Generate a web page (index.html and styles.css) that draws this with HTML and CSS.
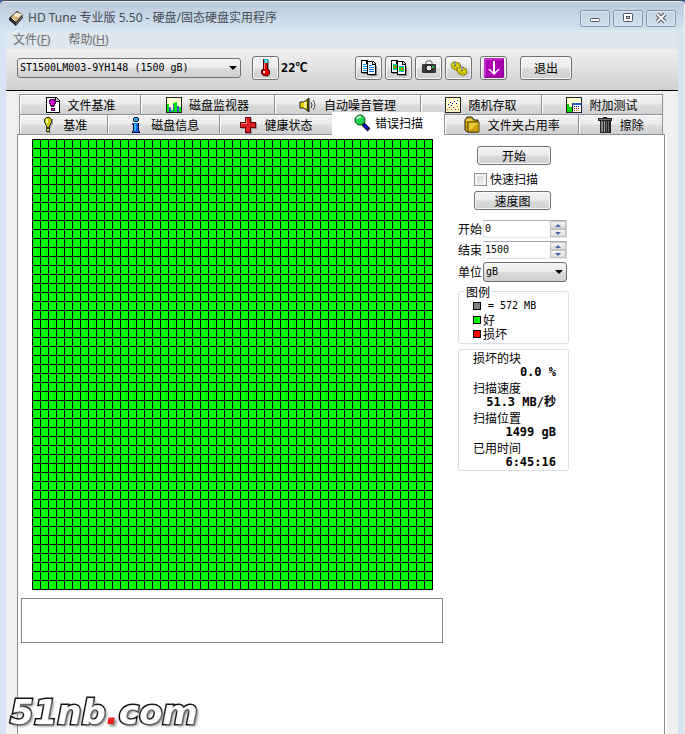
FILE: index.html
```html
<!DOCTYPE html>
<html lang="zh-CN">
<head>
    <meta charset="UTF-8">
    <meta name="viewport" content="width=device-width, initial-scale=1.0">
    <title>HD Tune 专业版 5.50</title>
    <link rel="stylesheet" href="styles.css">
</head>
<body>
    <div class="window">
        <header class="titlebar">
            <svg class="app-icon" width="16" height="16" viewBox="0 0 16 16">
                <path d="M1 8L9 1l6 4-7 9z" fill="#222"/>
                <path d="M1 8l7 6v2L1 10z" fill="#111"/>
                <path d="M8 14l7-9v3l-7 8z" fill="#555"/>
                <path d="M3 7l6-5 5 3-6 7z" fill="#d8b078"/>
                <ellipse cx="9" cy="5" rx="3" ry="2" fill="#f8ecd0"/>
                <path d="M4 8l3 3M12 4l2 1" stroke="#fff" fill="none"/>
            </svg>
            <h1>HD Tune 专业版 5.50 - 硬盘/固态硬盘实用程序</h1>
            <div class="window-buttons">
                <button type="button" aria-label="最小化">
                    <svg width="12" height="12" viewBox="0 0 12 12"><rect x="1.500" y="6.500" width="9" height="3" rx="1" fill="#fff" stroke="#535666"/></svg>
                </button>
                <button type="button" aria-label="最大化">
                    <svg width="12" height="12" viewBox="0 0 12 12"><rect x="1.500" y="1.500" width="9" height="8" rx="1" fill="#fff" stroke="#535666"/><rect x="4.500" y="4.500" width="3" height="2" fill="#c8d4e2" stroke="#535666"/></svg>
                </button>
                <button type="button" aria-label="关闭">
                    <svg width="12" height="12" viewBox="0 0 12 12"><path d="M2 2l8 8M10 2l-8 8" stroke="#535666" stroke-width="4"/><path d="M2 2l8 8M10 2l-8 8" stroke="#fff" stroke-width="2"/></svg>
                </button>
            </div>
        </header>

        <div class="client">
            <nav class="menubar">
                <a href="#file">文件(<u>F</u>)</a>
                <a href="#help">帮助(<u>H</u>)</a>
            </nav>

            <div class="toolbar">
                <div class="select drive-select">
                    <select aria-label="硬盘">
                        <option>ST1500LM003-9YH148 (1500 gB)</option>
                    </select>
                </div>
                <div class="temperature">
                    <button type="button" class="tool" aria-label="温度">
                        <svg width="16" height="18" viewBox="0 0 16 18" shape-rendering="crispEdges">
                            <path d="M10 1h1v10h1v6h-1v1H7v-1h3z" fill="#999"/>
                            <path d="M5 0h5v10h1v1h1v4h-1v1h-1v1H5v-1H4v-1H3v-4h1v-1h1z" fill="#500"/>
                            <path d="M6 0h4v4H6z" fill="#18a8b8"/><path d="M7 1h2v3H7z" fill="#60f0f8"/>
                            <path d="M6 4h3v7h2v4h-1v1H5v-1H4v-3l2-2z" fill="#e80000"/>
                            <path d="M6 4h1v6H6z" fill="#ff8080"/>
                            <path d="M5 12h2v2H5z" fill="#fff"/>
                        </svg>
                    </button>
                    <span>22℃</span>
                </div>
                <div class="tools">
                    <button type="button" class="tool" aria-label="复制文本">
                        <svg width="18" height="18" viewBox="0 0 18 18" shape-rendering="crispEdges">
                            <path d="M2 14h7v1H2zM9 16h8v1H9zM16 7h1v10h-1z" fill="#888"/>
                            <path d="M1 1h6l3 3v10H1z" fill="#000"/><path d="M2 2h4v3h3v8H2z" fill="#fff"/>
                            <path d="M3 5h3v1H3zM3 7h4v1H3zM3 9h4v1H3zM3 11h4v1H3z" fill="#0090f0"/>
                            <path d="M7 2h6l3 3v11H7z" fill="#000"/><path d="M8 3h4v3h3v9H8z" fill="#fff"/><path d="M13 3v2h2z" fill="#ccc"/>
                            <path d="M9 6h3v1H9zM9 8h5v1H9zM9 10h5v1H9zM9 12h5v1H9z" fill="#0070f0"/>
                        </svg>
                    </button>
                    <button type="button" class="tool" aria-label="复制图像">
                        <svg width="18" height="18" viewBox="0 0 18 18" shape-rendering="crispEdges">
                            <path d="M2 14h7v1H2zM9 16h8v1H9zM16 7h1v10h-1z" fill="#888"/>
                            <path d="M1 1h6l3 3v10H1z" fill="#000"/><path d="M2 2h4v3h3v8H2z" fill="#fff"/>
                            <path d="M3 5h4v6H3z" fill="#00b0d0"/><path d="M3 6h4v4H3z" fill="#00d820"/><path d="M4 7h2v2H4z" fill="#c07000"/>
                            <path d="M7 2h6l3 3v11H7z" fill="#000"/><path d="M8 3h4v3h3v9H8z" fill="#fff"/><path d="M13 3v2h2z" fill="#ccc"/>
                            <path d="M9 7h5v6H9z" fill="#00a0f0"/><path d="M9 8h5v4H9z" fill="#00e800"/><path d="M11 9h2v2h-2z" fill="#e06000"/>
                        </svg>
                    </button>
                    <button type="button" class="tool" aria-label="截图">
                        <svg width="18" height="18" viewBox="0 0 18 18">
                            <path d="M6 6V3l1-1h4l1 1v3" fill="none" stroke="#666" stroke-width="1"/>
                            <rect x="2" y="5" width="14" height="9" rx="1" fill="#303030"/>
                            <path d="M4 5v9M14 5v9" stroke="#555"/>
                            <circle cx="9" cy="9" r="3" fill="#e8e8e8" stroke="#111"/>
                            <rect x="12" y="7" width="2" height="2" fill="#20d040"/>
                        </svg>
                    </button>
                    <button type="button" class="tool" aria-label="设置">
                        <svg width="18" height="18" viewBox="0 0 18 18">
                            <g stroke="#4c4800" stroke-width="1" stroke-dasharray="1 1">
                                <ellipse cx="6" cy="7" rx="5" ry="4" fill="#c8c000" transform="rotate(25 6 7)"/>
                                <ellipse cx="12" cy="12" rx="5" ry="4" fill="#c8c000" transform="rotate(25 12 12)"/>
                            </g>
                            <path d="M2 6q3-2 7 2M8 11q3-2 7 2" fill="none" stroke="#f4f040"/>
                            <path d="M5 2v5M12 7v5" stroke="#666" stroke-width="2"/>
                            <path d="M5 2v4M12 7v4" stroke="#ccc"/>
                        </svg>
                    </button>
                    <button type="button" class="tool tool-save" aria-label="保存">
                        <svg width="20" height="20" viewBox="0 0 20 20">
                            <rect width="20" height="20" rx="1" fill="#b000b4"/>
                            <path d="M1 19V1h18" fill="none" stroke="#d860dc"/>
                            <path d="M1 19h18V1" fill="none" stroke="#780080"/>
                            <path d="M10 3v12" stroke="#fff" stroke-width="2"/>
                            <path d="M4 11h2l3 3h2l3-3h2l-6 6z" fill="#fff"/>
                        </svg>
                    </button>
                    <button type="button" class="button exit">退出</button>
                </div>
            </div>

            <main>
                <div class="tabs" role="tablist">
                    <div class="tab-row">
                        <button type="button" role="tab" class="tab w-medium">
                            <svg width="16" height="16" viewBox="0 0 16 16" shape-rendering="crispEdges">
                                <path d="M1 0h10l4 4v12H1z" fill="#000"/><path d="M2 1h8v4h4v10H2z" fill="#fff"/><path d="M11 1v3h3z" fill="#ccc"/>
                                <path d="M5 2h5v1h1v4h-1v2H9v1H6V9H5V7H4V3h1z" fill="#500050"/><path d="M6 3h3v1h1v2H9v2H6V6H5V4h1z" fill="#e000e0"/>
                                <path d="M6 11h4v3H6z" fill="#500050"/><path d="M7 12h2v1H7z" fill="#f0f"/>
                            </svg>
                            文件基准
                        </button>
                        <button type="button" role="tab" class="tab w-large">
                            <svg width="16" height="16" viewBox="0 0 16 16" shape-rendering="crispEdges">
                                <path d="M0 0h16v16H0z" fill="#222"/><path d="M1 1h14v14H1z" fill="#ffffd0"/>
                                <path d="M1 7h2v3h2v3h2V6h2V5h2v4h2v1h2v5H1z" fill="#00e800"/>
                                <path d="M3 10h2v5H3zM7 7h1v8H7zM11 9h2v6h-2z" fill="#4050e0"/>
                            </svg>
                            磁盘监视器
                        </button>
                        <button type="button" role="tab" class="tab w-wide">
                            <svg width="18" height="16" viewBox="0 0 18 16">
                                <path d="M1 5h4l5-4v14l-5-4H1z" fill="#e8d800" stroke="#222"/>
                                <path d="M6 5v6" stroke="#fff89a" stroke-width="2"/><path d="M9 2v12" stroke="#444000" stroke-width="2"/>
                                <path d="M12 5q2 3 0 6M14 3q4 5 0 10" fill="none" stroke="#444"/>
                            </svg>
                            自动噪音管理
                        </button>
                        <button type="button" role="tab" class="tab w-medium">
                            <svg width="16" height="16" viewBox="0 0 16 16" shape-rendering="crispEdges">
                                <path d="M0 0h16v16H0z" fill="#222"/><path d="M1 1h14v14H1z" fill="#ffffd0"/>
                                <path d="M3 7h1v1H3zM5 5h1v1H5zM7 6h1v1H7zM9 4h1v1H9zM12 3h1v1h-1zM11 6h1v1h-1zM6 8h1v1H6z" fill="#00f"/>
                                <path d="M2 12h1v1H2zM4 10h1v1H4zM6 12h1v1H6zM8 10h1v1H8zM10 12h1v1h-1zM12 9h1v1h-1zM13 12h1v1h-1z" fill="#f22"/>
                            </svg>
                            随机存取
                        </button>
                        <button type="button" role="tab" class="tab w-medium">
                            <svg width="16" height="16" viewBox="0 0 16 16" shape-rendering="crispEdges">
                                <path d="M0 0h16v16H0z" fill="#222"/><path d="M1 1h14v14H1z" fill="#ffffd0"/>
                                <path d="M1 7h2v8H1zM3 10h3v5H3z" fill="#00d800"/>
                                <path d="M6 6h10v10H6z" fill="#224"/><path d="M7 8h8v7H7z" fill="#fff"/><path d="M7 6h8v2H7z" fill="#2060d0"/>
                                <path d="M8 9h1v1H8zM10 9h1v1h-1zM12 9h1v1h-1z" fill="#00f"/><path d="M8 11h1v1H8zM10 11h1v1h-1zM12 11h1v1h-1zM8 13h1v1H8zM10 13h1v1h-1z" fill="#f22"/>
                            </svg>
                            附加测试
                        </button>
                    </div>
                    <div class="tab-row">
                        <button type="button" role="tab" class="tab w-small">
                            <svg width="16" height="16" viewBox="0 0 16 16" shape-rendering="crispEdges">
                                <path d="M12 2h1v5h-1v2h-1v2h-1V8zM7 15h4v1H7z" fill="#999"/>
                                <path d="M6 0h4v1h1v1h1v4h-1v2h-1v3H6V8H5V6H4V2h1V1h1z" fill="#333"/>
                                <path d="M6 1h4v1h1v4h-1v2H9v2H7V8H6V6H5V2h1z" fill="#d0c800"/><path d="M6 2h2v4H6z" fill="#ffff90"/>
                                <path d="M6 11h4v4H6z" fill="#333"/><path d="M7 12h2v2H7z" fill="#e8e000"/>
                            </svg>
                            基准
                        </button>
                        <button type="button" role="tab" class="tab w-info">
                            <svg width="16" height="16" viewBox="0 0 16 16" shape-rendering="crispEdges">
                                <path d="M6 0h4v1h1v3h-1v1H6V4H5V1h1z" fill="#012"/><path d="M6 1h4v3H6z" fill="#18a8f8"/>
                                <path d="M4 6h7v8h1v2H4v-2h1V8H4z" fill="#003"/>
                                <path d="M4 6h6v8h1v1H5v-1h1V7H4z" fill="#0868e8"/>
                                <path d="M6 7h2v7H6z" fill="#28b8ff"/>
                            </svg>
                            磁盘信息
                        </button>
                        <button type="button" role="tab" class="tab w-info">
                            <svg width="18" height="18" viewBox="0 0 18 18" shape-rendering="crispEdges">
                                <path d="M7 2h6v5h5v6h-5v5H7v-5H2V7h5z" fill="#999"/>
                                <path d="M6 1h6v5h5v6h-5v5H6v-5H1V6h5z" fill="#600"/>
                                <path d="M7 2h4v5h5v4h-5v5H7v-5H2V7h5z" fill="#e02020"/><path d="M7 2h1v6H2V7h5z" fill="#ff7878"/>
                            </svg>
                            健康状态
                        </button>
                        <button type="button" role="tab" class="tab w-info active" aria-selected="true">
                            <svg width="18" height="18" viewBox="0 0 18 18">
                                <path d="M10 10l6 6" stroke="#112" stroke-width="4"/><path d="M11 11l4 4" stroke="#1018e0" stroke-width="2"/>
                                <circle cx="7" cy="6" r="5" fill="#20d850" stroke="#064010"/>
                                <path d="M4 5q1-3 4-2" stroke="#c8ffd0" stroke-width="2" fill="none"/>
                            </svg>
                            错误扫描
                        </button>
                        <button type="button" role="tab" class="tab w-large">
                            <svg width="18" height="18" viewBox="0 0 18 18">
                                <path d="M2 4l2-3h5l2 3h4v12H4l-2-2z" fill="#d0a800" stroke="#222"/>
                                <path d="M3 4h6" stroke="#fff2a0"/><path d="M5 6h11v10H5z" fill="#f0c830" stroke="#443800"/>
                                <path d="M6 15l9-8v8z" fill="#d0a010"/>
                            </svg>
                            文件夹占用率
                        </button>
                        <button type="button" role="tab" class="tab w-erase">
                            <svg width="16" height="16" viewBox="0 0 16 16" shape-rendering="crispEdges">
                                <path d="M6 0h4v1h5v3h-1v12H3V4H1V1h5z" fill="#222"/><path d="M2 2h12v1H2z" fill="#777"/>
                                <path d="M4 4h2v11H4z" fill="#888"/><path d="M7 4h1v11H7z" fill="#aaa"/><path d="M9 4h1v11H9zM11 4h1v11h-1z" fill="#666"/>
                            </svg>
                            擦除
                        </button>
                    </div>
                </div>

                <section class="panel" role="tabpanel">
                    <div class="scan">
                        <div class="blocks" role="img" aria-label="扫描结果"></div>
                        <div class="side">
                            <form class="controls">
                                <button type="button" class="button start">开始</button>
                                <label class="check"><input type="checkbox">快速扫描</label>
                                <button type="button" class="button">速度图</button>
                            </form>
                            <div class="fields">
                                <div class="field">
                                    <label for="start">开始</label>
                                    <div class="spinner">
                                        <input type="text" id="start" value="0">
                                        <div class="spin-buttons">
                                            <button type="button" class="up" aria-label="增加"></button>
                                            <button type="button" class="down" aria-label="减少"></button>
                                        </div>
                                    </div>
                                </div>
                                <div class="field">
                                    <label for="end">结束</label>
                                    <div class="spinner">
                                        <input type="text" id="end" value="1500">
                                        <div class="spin-buttons">
                                            <button type="button" class="up" aria-label="增加"></button>
                                            <button type="button" class="down" aria-label="减少"></button>
                                        </div>
                                    </div>
                                </div>
                                <div class="field">
                                    <label for="unit">单位</label>
                                    <div class="select">
                                        <select id="unit">
                                            <option>gB</option>
                                        </select>
                                    </div>
                                </div>
                            </div>
                            <fieldset class="legend">
                                <legend>图例</legend>
                                <div class="legend-item"><i class="swatch"></i><span class="size">= 572 MB</span></div>
                                <div class="legend-item"><i class="swatch good"></i>好</div>
                                <div class="legend-item"><i class="swatch bad"></i>损坏</div>
                            </fieldset>
                            <dl class="stats">
                                <dt>损坏的块</dt>
                                <dd>0.0 %</dd>
                                <dt>扫描速度</dt>
                                <dd>51.3 MB/秒</dd>
                                <dt>扫描位置</dt>
                                <dd>1499 gB</dd>
                                <dt>已用时间</dt>
                                <dd>6:45:16</dd>
                            </dl>
                        </div>
                    </div>
                    <textarea class="log" aria-label="日志" readonly></textarea>
                </section>
            </main>
        </div>
    </div>
    <div class="watermark">51nb<span>.</span>com</div>
</body>
</html>
```

FILE: styles.css
```css
:root {
    --frame: #d7e4f2;
    --face: #f0f0f0;
    --line: #8c8e98;
    --button: linear-gradient(#f3f3f3, #ebebeb 49%, #dcdcdc 51%, #cfcfcf);
    --mono: "DejaVu Sans Mono", "Noto Sans CJK SC", monospace;
}

* {
    margin: 0;
    padding: 0;
    box-sizing: border-box;
}

body {
    min-height: 100vh;
    background: #3a62b0;
    color: #000;
    font: 12px/16px "Noto Sans CJK SC", sans-serif;
}

button, input, select, textarea {
    font: inherit;
    color: inherit;
}

svg {
    display: block;
    flex: none;
}

.window {
    min-height: 100vh;
    display: flex;
    flex-direction: column;
    background: var(--frame);
    border-top: 1px solid #4a4d55;
    border-right: 1px solid #eef3fa;
    border-radius: 5px 5px 0 0;
    overflow: hidden;
}

/* title bar */
.titlebar {
    display: flex;
    align-items: center;
    gap: 4px;
    height: 29px;
    padding: 4px 8px 0;
    background: linear-gradient(#bccad9, #d5e2f0);
    border-top: 1px solid #e6edf5;
}

.titlebar h1 {
    font: 12px/16px "Noto Sans", "Noto Sans CJK SC", sans-serif;
    color: #444b55;
}

.window-buttons {
    display: flex;
    gap: 3px;
    margin-left: auto;
}

.window-buttons button {
    display: flex;
    justify-content: center;
    align-items: center;
    width: 30px;
    height: 17px;
    background: linear-gradient(#c6d3e2, #d0ddea);
    border: 1px solid #8494ad;
    border-radius: 2px;
    box-shadow: inset 0 0 0 1px #dfe8f2;
}

.client {
    flex: 1;
    display: flex;
    flex-direction: column;
    margin: 0 6px;
    background: var(--face);
}

.menubar {
    display: flex;
    gap: 18px;
    height: 19px;
    padding: 1px 7px;
    background: #dee6ee;
}

.menubar a {
    font: 12px/18px "Noto Sans", "Noto Sans CJK SC", sans-serif;
    color: #6d6d6d;
    text-decoration: none;
}

/* toolbar */
.toolbar {
    display: flex;
    align-items: center;
    gap: 11px;
    height: 42px;
    padding: 0 11px 4px;
    background: linear-gradient(#f0f0f0, #d0d0d0);
    border-bottom: 1px solid #000;
}

.select {
    position: relative;
    flex: 1;
}

.select select {
    display: block;
    width: 100%;
    height: 20px;
    padding: 0 20px 0 2px;
    appearance: none;
    background: var(--button);
    border: 1px solid #707070;
    border-radius: 3px;
    font: 10px/18px var(--mono);
}

.select::after {
    content: "";
    position: absolute;
    top: 8px;
    right: 4px;
    border: 4px solid transparent;
    border-top-color: #000;
    border-bottom: 0;
    pointer-events: none;
}

.drive-select {
    flex: 0 1 224px;
}

.temperature {
    display: flex;
    align-items: center;
    gap: 2px;
    width: 92px;
    font: bold 12px/16px var(--mono);
}

.tools {
    display: flex;
    gap: 3px;
}

.tool, .button {
    background: var(--button);
    border: 1px solid #707070;
    border-radius: 3px;
    box-shadow: inset 0 0 0 1px #fafafa;
}

.tool {
    display: flex;
    justify-content: center;
    align-items: center;
    width: 27px;
    height: 24px;
}

.tool-save {
    margin-left: 5px;
}

.button {
    height: 19px;
    line-height: 16px;
}

.exit {
    width: 52px;
    height: 24px;
    margin-left: 10px;
}

/* tabs */
main {
    flex: 1;
    display: flex;
    flex-direction: column;
    padding: 3px 13px 0 11px;
}

.tabs {
    padding: 0 2px;
}

.tab-row {
    display: flex;
}

.tab {
    display: flex;
    justify-content: center;
    align-items: center;
    gap: 7px;
    height: 20px;
    background: linear-gradient(#f2f2f2, #ebebeb 49%, #dddddd 51%, #d0d0d0);
    border: 1px solid var(--line);
    border-width: 1px 0 0 1px;
    box-shadow: inset 1px 1px 0 #fff;
    line-height: 18px;
    white-space: nowrap;
}

.tab:last-child {
    border-right-width: 1px;
}

.tab.active {
    position: relative;
    height: 23px;
    margin: -2px 0 -1px;
    gap: 4px;
    padding-bottom: 3px;
    background: #fff;
    border-color: #fff;
}

.w-small { flex: 88 1 0; }
.w-erase { flex: 84 1 0; }
.w-info { flex: 112 1 0; }
.w-medium { flex: 121 1 0; }
.w-large { flex: 134 1 0; }
.w-wide { flex: 146 1 0; }

/* error scan */
.panel {
    flex: 1;
    padding: 4px 3px;
    background: #fff;
    border: 1px solid var(--line);
    border-bottom: 0;
    box-shadow: 2px 0 0 #fff;
}

.scan {
    display: flex;
    align-items: flex-start;
    gap: 25px;
    padding-left: 11px;
}

/* 50 x 50 blocks, one background tile each */
.blocks {
    flex: none;
    width: 401px;
    height: 451px;
    background:
        linear-gradient(90deg, #000 1px, transparent 1px) 0 0 / 8px 9px,
        linear-gradient(#000 1px, transparent 1px) 0 0 / 8px 9px,
        #00ff00;
    border: solid #000;
    border-width: 0 1px 1px 0;
}

.side {
    width: 111px;
    padding-top: 7px;
}

.controls {
    display: flex;
    flex-direction: column;
    gap: 4px;
    padding: 0 18px 0 16px;
}

.start {
    margin-left: 3px;
}

.check {
    display: flex;
    align-items: center;
    gap: 3px;
    padding-top: 2px;
    line-height: 16px;
    white-space: nowrap;
}

.check input {
    width: 13px;
    height: 13px;
    appearance: none;
    background: linear-gradient(135deg, #c9ced4, #f6f6f6);
    border: 1px solid #8e8f8f;
    box-shadow: inset 0 0 0 2px #f4f4f4;
}

.fields {
    display: flex;
    flex-direction: column;
    gap: 3px;
    margin-top: 10px;
    padding-right: 2px;
}

.field {
    display: flex;
    align-items: center;
    gap: 1px;
}

.field label {
    flex: none;
    line-height: 18px;
}

.spinner {
    flex: 1;
    display: flex;
    min-width: 0;
    height: 18px;
    border: 1px solid #e3e9ef;
    border-top-color: #abadb3;
    border-right-color: #c8ccd2;
}

.spinner input {
    flex: 1;
    min-width: 0;
    padding-left: 1px;
    border: 0;
    font: 10px/16px var(--mono);
}

.spin-buttons {
    flex: none;
    display: flex;
    flex-direction: column;
    width: 16px;
}

.spin-buttons button {
    flex: 1;
    display: flex;
    justify-content: center;
    align-items: center;
    background: linear-gradient(#f6f6f6, #dcdcdc);
    border: 1px solid #c4c4c4;
}

.spin-buttons button::before {
    content: "";
    border: 3px solid transparent;
}

.spin-buttons .up::before {
    border-top: 0;
    border-bottom-color: #4a62b0;
}

.spin-buttons .down::before {
    border-bottom: 0;
    border-top-color: #4a62b0;
}

.legend, .stats {
    border: 1px solid #d5dfe5;
    border-radius: 3px;
}

.legend {
    margin-top: 2px;
    padding: 0 14px 2px;
}

.legend legend {
    margin-left: -9px;
    padding: 0 2px;
    line-height: 15px;
}

.legend-item {
    display: flex;
    align-items: center;
    gap: 2px;
    line-height: 14px;
}

.swatch {
    width: 8px;
    height: 8px;
    background: #808080;
    border: 1px solid #000;
}

.good { background: #00ff00; }
.bad { background: #ff0000; }

.size {
    padding-left: 5px;
    font: 10px/14px var(--mono);
}

.stats {
    margin-top: 5px;
    padding: 0 12px 0 14px;
    line-height: 15px;
}

.stats dd {
    font: bold 12px/15px var(--mono);
    text-align: right;
    white-space: nowrap;
}

.log {
    display: block;
    width: 66%;
    height: 45px;
    margin-top: 8px;
    background: #fff;
    border: 1px solid #828790;
    resize: none;
}

.watermark {
    position: fixed;
    left: 10px;
    bottom: 0;
    color: #fff;
    font: italic bold 34px/44px "DejaVu Sans", sans-serif;
    -webkit-text-stroke: 3px #111;
    paint-order: stroke fill;
    text-shadow: 2px 2px 3px #777;
}

.watermark span {
    color: #f02018;
    -webkit-text-stroke: 0;
}
```
